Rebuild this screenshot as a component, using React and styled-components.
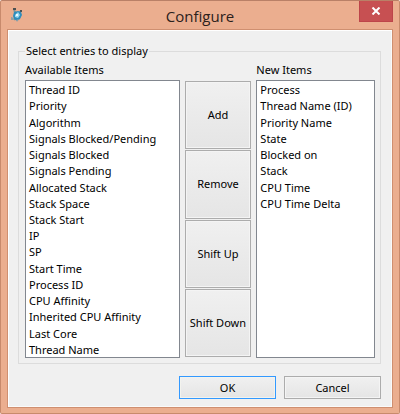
import React from "react";
import styled, { createGlobalStyle } from "styled-components";

const GlobalStyle = createGlobalStyle`
  * { box-sizing: border-box; }
  body { margin: 0; background: #fff; }
  button, select, fieldset, legend { font: inherit; color: inherit; }
`;

const Window = styled.main`
  display: grid;
  grid-template-rows: 28px 1fr;
  min-height: 100vh;
  padding: 0 6px 5px;
  background: #ebae8f;
  border: 1px solid #c88a6c;
  border-top-color: #b98067;
  border-radius: 2px;
  color: #000;
  font: 11px/16px "Noto Sans", "Open Sans", sans-serif;
`;

const TitleBar = styled.header`
  display: grid;
  grid-template-columns: 34px 1fr 34px;
  align-items: start;
`;

const AppIcon = styled.svg`
  width: 16px;
  height: 16px;
  margin: 6px 0 0 1px;
`;

const Title = styled.h1`
  margin: 0;
  padding-top: 5px;
  text-align: center;
  font-family: "Open Sans", "Noto Sans", sans-serif;
  font-size: 15px;
  line-height: 20px;
  font-weight: 400;
  color: #2b211c;
`;

const CloseButton = styled.button`
  display: grid;
  place-items: center;
  height: 21px;
  padding: 0 0 1px;
  border: 1px solid #bd454a;
  border-top: 0;
  background: #c75052;
`;

const Body = styled.form`
  display: flex;
  flex-direction: column;
  padding: 13px 11px 8px 10px;
  border: 1px solid #cf8f70;
  background: #f0f0f0;
  box-shadow: inset 1px 1px #fff, inset -1px -1px #fafafa;
`;

const Group = styled.fieldset`
  flex: 1;
  display: flex;
  min-width: 0;
  margin: 0;
  padding: 3px 5px 5px 6px;
  border: 1px solid #dcdcdc;
`;

const Legend = styled.legend`
  padding: 0 1px;
`;

const Columns = styled.div`
  flex: 1;
  display: grid;
  grid-template-columns: 155fr 67fr 119fr;
  grid-template-rows: 18px 1fr;
  column-gap: 5px;
`;

const ColumnLabel = styled.label`
  grid-row: 1;
  grid-column: ${(p) => p.$column};
`;

const ListFrame = styled.div`
  grid-row: 2;
  grid-column: ${(p) => p.$column};
  display: flex;
  container-type: size;
  border: 1px solid #82878f;
  background: #fff;
`;

const ListBox = styled.select`
  width: 100%;
  height: 100%;
  padding: 0;
  border: 0;
  outline: 0;
  background: transparent;
  overflow: hidden;
`;

const Item = styled.option`
  display: flex;
  align-items: center;
  height: calc(100cqh / 17);
  min-height: 0;
  padding: 1px 3px 0;
`;

const Actions = styled.div`
  grid-row: 2;
  grid-column: 2;
  display: grid;
  grid-template-rows: repeat(4, 1fr);
  gap: 1px;
  padding: 1px 0;
`;

const Button = styled.button`
  padding: 0;
  border: 1px solid ${(p) => (p.$primary ? "#3399ff" : "#acacac")};
  background: linear-gradient(#f0f0f0, #e5e5e5);
  box-shadow: inset 0 0 0 1px ${(p) => (p.$primary ? "#f3f3ee" : "#f4f4f4")};
`;

const Footer = styled.footer`
  display: grid;
  grid-template-columns: 97px 97px;
  grid-auto-rows: 23px;
  justify-content: end;
  gap: 8px;
  margin-top: 12px;
`;

const available = [
  "Thread ID", "Priority", "Algorithm", "Signals Blocked/Pending",
  "Signals Blocked", "Signals Pending", "Allocated Stack", "Stack Space",
  "Stack Start", "IP", "SP", "Start Time", "Process ID", "CPU Affinity",
  "Inherited CPU Affinity", "Last Core", "Thread Name",
];

const selected = [
  "Process", "Thread Name (ID)", "Priority Name", "State",
  "Blocked on", "Stack", "CPU Time", "CPU Time Delta",
];

function ItemList({ id, label, column, items }) {
  return (
    <>
      <ColumnLabel htmlFor={id} $column={column}>{label}</ColumnLabel>
      <ListFrame $column={column}>
        <ListBox id={id} size={17} multiple>
          {items.map((item) => <Item key={item}>{item}</Item>)}
        </ListBox>
      </ListFrame>
    </>
  );
}

export default function App() {
  return (
    <>
      <GlobalStyle />
      <Window>
        <TitleBar>
          <AppIcon viewBox="0 0 16 16" aria-hidden="true">
            <path d="M6 3l2 4M13 4l-3 3M6 13l2-3M12 11l-2-2" stroke="#7f949a" strokeWidth="2" fill="none" />
            <path d="M5 1h3v2H5zM12 3h2v2h-2z" fill="#4b5152" />
            <path d="M6 5l4-1 3 1 1 3-2 4-3 2-3-2-1-3z" fill="#2f8dbc" />
            <path d="M7 8l3-3 2 3-2 3-3-1z" fill="#9ad9f1" />
            <path d="M8 7h2v2H8z" fill="#eefaff" />
            <path d="M3 10l3 1-1 2H3zM8 13l3-1-2 3z" fill="#8ea0a6" />
          </AppIcon>
          <Title>Configure</Title>
          <CloseButton type="button" aria-label="Close">
            <svg width="10" height="8" viewBox="0 0 10 8" aria-hidden="true">
              <path d="M1.5 0.5l7 7M8.5 0.5l-7 7" stroke="#fff" strokeWidth="2" />
            </svg>
          </CloseButton>
        </TitleBar>
        <Body onSubmit={(e) => e.preventDefault()}>
          <Group>
            <Legend>Select entries to display</Legend>
            <Columns>
              <ItemList id="available" label="Available Items" column={1} items={available} />
              <Actions>
                <Button type="button">Add</Button>
                <Button type="button">Remove</Button>
                <Button type="button">Shift Up</Button>
                <Button type="button">Shift Down</Button>
              </Actions>
              <ItemList id="new" label="New Items" column={3} items={selected} />
            </Columns>
          </Group>
          <Footer>
            <Button type="submit" $primary>OK</Button>
            <Button type="button">Cancel</Button>
          </Footer>
        </Body>
      </Window>
    </>
  );
}
